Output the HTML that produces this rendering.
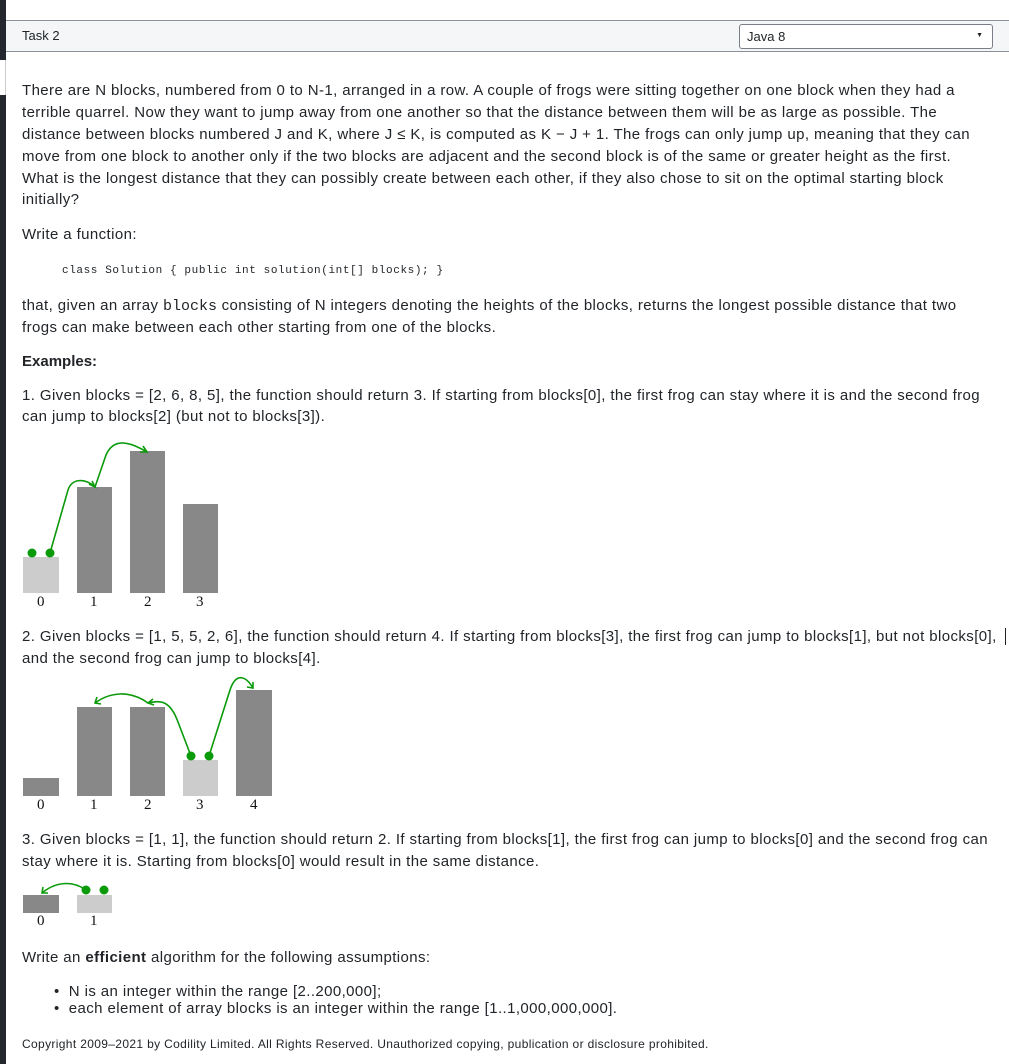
<!DOCTYPE html>
<html><head><meta charset="utf-8"><style>
*{margin:0;padding:0;box-sizing:border-box}
body{width:1009px;height:1064px;overflow:hidden;background:#fff;font-family:"Liberation Sans",sans-serif;color:#212529;position:relative}
.l{position:absolute;left:22px;font-size:15px;white-space:nowrap;letter-spacing:0.4px;line-height:22px}
.strip{position:absolute;left:0;width:6px;background:#24272e}
code,.mono{font-family:"Liberation Mono",monospace}
.n{font-family:"Liberation Serif",serif;font-size:15px;position:absolute;color:#111}
</style></head><body>
<div class="strip" style="top:0;height:60px"></div>
<div class="strip" style="top:95px;height:969px"></div>
<div style="position:absolute;left:5px;top:60px;width:1px;height:35px;background:#ccc"></div>
<div style="position:absolute;left:6px;top:20px;width:1003px;height:32px;background:#f5f6f8;border-top:1px solid #8a9099;border-bottom:1px solid #8a9099"></div>
<div style="position:absolute;left:22px;top:28px;font-size:13px">Task 2</div>
<div style="position:absolute;left:739px;top:24px;width:254px;height:25px;border:1px solid #7a7f87;border-radius:3px;background:#fff;font-size:13px;padding:4px 0 0 7px">Java 8<span style="position:absolute;right:9px;top:7px;font-size:7px">▼</span></div>

<div class="l" style="top:80px">There are N blocks, numbered from 0 to N-1, arranged in a row. A couple of frogs were sitting together on one block when they had a</div>
<div class="l" style="top:102px">terrible quarrel. Now they want to jump away from one another so that the distance between them will be as large as possible. The</div>
<div class="l" style="top:124px">distance between blocks numbered J and K, where J ≤ K, is computed as K − J + 1. The frogs can only jump up, meaning that they can</div>
<div class="l" style="top:146px">move from one block to another only if the two blocks are adjacent and the second block is of the same or greater height as the first.</div>
<div class="l" style="top:168px">What is the longest distance that they can possibly create between each other, if they also chose to sit on the optimal starting block</div>
<div class="l" style="top:189px">initially?</div>
<div class="l" style="top:224px">Write a function:</div>
<div class="l mono" style="top:260px;left:62px;font-size:11px;letter-spacing:0.6px">class Solution { public int solution(int[] blocks); }</div>
<div class="l" style="top:295px">that, given an array <span class="mono" style="letter-spacing:0">blocks</span> consisting of N integers denoting the heights of the blocks, returns the longest possible distance that two</div>
<div class="l" style="top:317px">frogs can make between each other starting from one of the blocks.</div>
<div class="l" style="top:351px;font-weight:bold;letter-spacing:0">Examples:</div>
<div class="l" style="top:385px">1. Given blocks = [2, 6, 8, 5], the function should return 3. If starting from blocks[0], the first frog can stay where it is and the second frog</div>
<div class="l" style="top:406px">can jump to blocks[2] (but not to blocks[3]).</div>

<svg style="position:absolute;left:0;top:0" width="1009" height="1064">
<g fill="#888">
<rect x="23" y="557" width="36" height="36" fill="#ccc"/>
<rect x="77" y="487" width="35" height="106"/>
<rect x="130" y="451" width="35" height="142"/>
<rect x="183" y="504" width="35" height="89"/>
<rect x="23" y="778" width="36" height="18"/>
<rect x="77" y="707" width="35" height="89"/>
<rect x="130" y="707" width="35" height="89"/>
<rect x="183" y="760" width="35" height="36" fill="#ccc"/>
<rect x="236" y="690" width="36" height="106"/>
<rect x="23" y="895" width="36" height="18"/>
<rect x="77" y="895" width="35" height="18" fill="#ccc"/>
</g>
<g fill="#0a9a0a">
<circle cx="32" cy="553" r="4.5"/><circle cx="50" cy="553" r="4.5"/>
<circle cx="191" cy="756" r="4.5"/><circle cx="209" cy="756" r="4.5"/>
<circle cx="86" cy="890" r="4.5"/><circle cx="104" cy="890" r="4.5"/>
</g>
<g fill="none" stroke="#0a9a0a" stroke-width="1.6">
<path d="M50 553 L68 490 C72 478 85 478 95 487"/><path d="M89 484 L95 487 L92 481"/>
<path d="M95 487 L106 455 C114 437 130 442 147 452"/><path d="M140 452 L147 452 L143 446"/>
<path d="M191 756 L178 722 C170 700 160 700 148 703"/><path d="M153 699 L148 703 L154 705"/>
<path d="M148 703 C130 690 110 692 95 703"/><path d="M97 697 L95 703 L101 704"/>
<path d="M209 756 L230 690 C236 672 246 676 253 688"/><path d="M247 687 L253 688 L253 682"/>
<path d="M86 890 C72 880 55 882 42 893"/><path d="M43 887 L42 893 L48 893"/>
</g>
</svg>
<div class="n" style="left:37px;top:594px">0</div><div class="n" style="left:90px;top:594px">1</div><div class="n" style="left:144px;top:594px">2</div><div class="n" style="left:196px;top:594px">3</div>

<div class="l" style="top:626px">2. Given blocks = [1, 5, 5, 2, 6], the function should return 4. If starting from blocks[3], the first frog can jump to blocks[1], but not blocks[0],</div>
<div style="position:absolute;left:1005px;top:628px;width:1px;height:17px;background:#222"></div>
<div class="l" style="top:648px">and the second frog can jump to blocks[4].</div>
<div class="n" style="left:37px;top:797px">0</div><div class="n" style="left:90px;top:797px">1</div><div class="n" style="left:144px;top:797px">2</div><div class="n" style="left:196px;top:797px">3</div><div class="n" style="left:250px;top:797px">4</div>

<div class="l" style="top:829px">3. Given blocks = [1, 1], the function should return 2. If starting from blocks[1], the first frog can jump to blocks[0] and the second frog can</div>
<div class="l" style="top:851px">stay where it is. Starting from blocks[0] would result in the same distance.</div>
<div class="n" style="left:37px;top:913px">0</div><div class="n" style="left:90px;top:913px">1</div>

<div class="l" style="top:947px">Write an <b>efficient</b> algorithm for the following assumptions:</div>
<div class="l" style="top:981px;left:54px">•&nbsp;&nbsp;N is an integer within the range [2..200,000];</div>
<div class="l" style="top:998px;left:54px">•&nbsp;&nbsp;each element of array blocks is an integer within the range [1..1,000,000,000].</div>
<div class="l" style="top:1036px;font-size:12px;line-height:16px;letter-spacing:0.35px">Copyright 2009–2021 by Codility Limited. All Rights Reserved. Unauthorized copying, publication or disclosure prohibited.</div>
</body></html>
